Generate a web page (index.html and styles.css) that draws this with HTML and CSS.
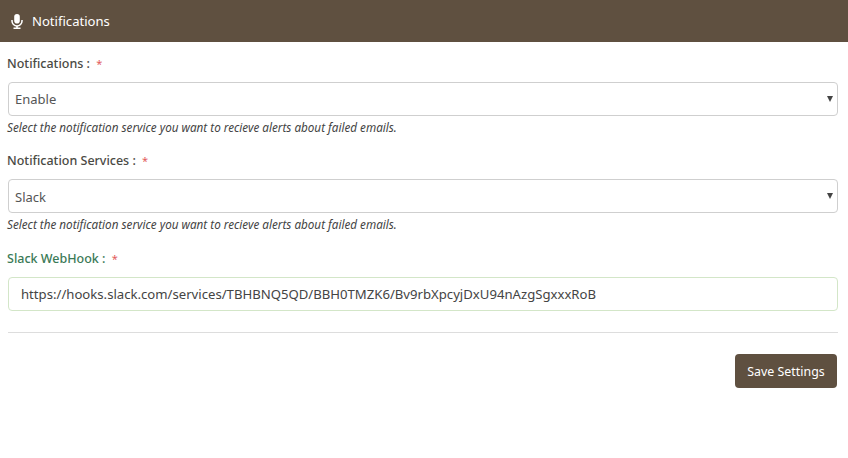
FILE: index.html
```html
<!DOCTYPE html>
<html lang="en">
<head>
<meta charset="utf-8">
<title>Notifications</title>
<link rel="stylesheet" href="styles.css">
</head>
<body>
<header class="panel-head">
  <svg class="mic" width="12" height="15" viewBox="0 0 12 15" aria-hidden="true">
    <rect x="3.2" y="0" width="5.6" height="9.5" rx="2.8" fill="#fff"/>
    <path d="M1 6V7a5 5 0 0 0 10 0V6" fill="none" stroke="#fff" stroke-width="1.5"/>
    <path d="M6 12V14M2.5 14.2H9.5" fill="none" stroke="#fff" stroke-width="1.6"/>
  </svg>
  <h1 class="panel-title">Notifications</h1>
</header>
<form class="form">
  <div class="field">
    <label class="label">Notifications : <span class="req">*</span></label>
    <div class="select-wrap">
      <select class="control"><option>Enable</option><option>Disable</option></select>
      <span class="caret"></span>
    </div>
    <p class="help">Select the notification service you want to recieve alerts about failed emails.</p>
  </div>
  <div class="field">
    <label class="label">Notification Services : <span class="req">*</span></label>
    <div class="select-wrap">
      <select class="control control-low"><option>Slack</option><option>Email</option></select>
      <span class="caret"></span>
    </div>
    <p class="help">Select the notification service you want to recieve alerts about failed emails.</p>
  </div>
  <div class="field field-last">
    <label class="label label-ok">Slack WebHook : <span class="req">*</span></label>
    <input class="control control-ok" type="text" value="https://hooks.slack.com/services/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RoB">
  </div>
  <hr class="rule">
  <div class="actions">
    <button class="btn" type="button">Save Settings</button>
  </div>
</form>
</body>
</html>
```
FILE: styles.css
```css
* { box-sizing: border-box; }
html, body { margin: 0; padding: 0; }
body {
  background: #fff;
  color: #4f4f4f;
  font-family: "Noto Sans", "Open Sans", sans-serif;
  font-size: 13px;
}
.panel-head {
  height: 42px;
  background: #5f5040;
  display: flex;
  align-items: center;
  padding-left: 11px;
  gap: 9px;
}
.mic { flex: none; }
.panel-title {
  margin: 0;
  color: #fff;
  font-size: 13.1px;
  font-weight: 400;
  line-height: 20px;
}
.form { padding: 11px 10px 0 8px; }
.field { margin-bottom: 15px; }
.field + .field { margin-bottom: 16px; }
.field-last { margin-bottom: 0; }
.label {
  display: block;
  height: 29px;
  margin-left: -1px;
  padding-top: 1px;
  line-height: 20px;
  font-size: 12.5px;
  font-weight: 500;
  color: #4a4a44;
}
.label-ok { color: #3b7a57; }
.req { color: #e25b5b; font-weight: 400; font-size: 11px; margin-left: 3px; }
.select-wrap { position: relative; }
.control {
  display: block;
  width: 100%;
  height: 34px;
  border: 1px solid #cfcfcf;
  border-radius: 4px;
  background: #fff;
  color: #555;
  font: inherit;
  font-size: 13px;
}
select.control {
  appearance: none;
  padding: 0 6px;
}
select.control-low { padding-top: 2px; }
input.control { padding: 0 12px; font-size: 13.15px; }
.control-ok { border-color: #d3e6c8; color: #444; }
.caret {
  position: absolute;
  right: 5px;
  top: 14px;
  width: 0;
  height: 0;
  border-left: 3.5px solid transparent;
  border-right: 3.5px solid transparent;
  border-top: 6px solid #444;
}
.help {
  margin: 3px 0 0 -1px;
  font-size: 11.7px;
  line-height: 16px;
  font-style: italic;
  color: #444;
}
.rule { margin: 21px 0 21px; border: 0; border-top: 1px solid #ddd; }
.actions { display: flex; justify-content: flex-end; padding-right: 1px; }
.btn {
  width: 102px;
  height: 34px;
  background: #5f5040;
  color: #fff;
  border: 0;
  border-radius: 4px;
  font: inherit;
  font-size: 12.4px;
  font-weight: 400;
}
```
